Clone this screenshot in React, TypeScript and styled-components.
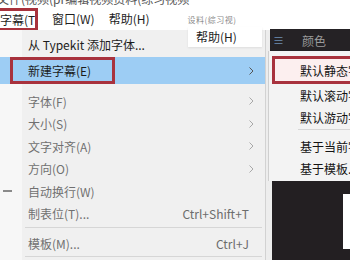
import styled, { createGlobalStyle } from "styled-components"

const Global = createGlobalStyle`
body {
  margin: 0;
  background: #ffffff;
  font-family: "Noto Sans CJK SC", "Noto Sans", sans-serif;
}
`

const Page = styled.div`
width: 350px;
height: 260px;
overflow: hidden;
position: relative;
display: flex;
flex-direction: column;
background: #ffffff;
font-size: 12px;
`
const TopStrip = styled.div`
height: 8px;
overflow: hidden;
`
const Caption = styled.div`
margin-top: -8px;
margin-left: -3px;
line-height: 14px;
font-size: 12px;
color: #555;
white-space: nowrap;
`
const MenuBar = styled.div`
height: 22px;
display: flex;
align-items: center;
gap: 14px;
color: #1e1e1e;
`
const MenuTitle = styled.div<{ $active?: boolean }>`
white-space: nowrap;
line-height: 22px;
${p => p.$active && `
  box-sizing: border-box;
  width: 45px;
  height: 23px;
  margin-left: -7px;
  margin-top: 1px;
  padding-left: 4px;
  border: 3px solid #a8323d;
  line-height: 17px;
  overflow: hidden;
`}
`
const Ghost = styled.div`
align-self: flex-start;
margin-top: 6px;
margin-left: 24px;
font-size: 8px;
letter-spacing: 0.5px;
color: #8a8a8a;
white-space: nowrap;
`
const Body = styled.div`
flex: 1;
display: flex;
min-height: 0;
`
const Dropdown = styled.div`
width: 266px;
flex-shrink: 0;
box-sizing: border-box;
border-right: 1px solid #d2d2d2;
padding-top: 3px;
display: flex;
flex-direction: column;
background: linear-gradient(to right, #f7f7f7 22px, #f0f0f0 22px);
`
const Row = styled.div<{ $h: number; $muted?: boolean; $active?: boolean }>`
height: ${p => p.$h}px;
flex-shrink: 0;
display: grid;
grid-template-columns: 28px 1fr auto 16px;
align-items: center;
color: ${p => (p.$muted ? "#707070" : "#1c1c1c")};
background: ${p => (p.$active ? "#9dcdf4" : "transparent")};
white-space: nowrap;
`
const Label = styled.span<{ $boxed?: boolean }>`
${p => p.$boxed && `
  box-sizing: border-box;
  align-self: stretch;
  width: 105px;
  margin-left: -18px;
  padding-left: 15px;
  border: 3px solid #a8323d;
  display: flex;
  align-items: center;
`}
`
const Shortcut = styled.span`
color: #6c6c6c;
`
const Mark = styled.span`
width: 9px;
height: 2px;
margin-left: 3px;
background: #8a8a8a;
`
const Separator = styled.div<{ $top: number; $bottom: number }>`
height: 1px;
flex-shrink: 0;
margin: ${p => p.$top}px 3px ${p => p.$bottom}px 25px;
background: #d6d6d6;
`
const Spacer = styled.div<{ $h: number }>`
height: ${p => p.$h}px;
flex-shrink: 0;
`
const Tip = styled.div`
position: absolute;
left: 188px;
top: 27px;
width: 74px;
height: 20px;
box-sizing: border-box;
padding-left: 8px;
line-height: 20px;
background: #ffffff;
color: #1e1e1e;
box-shadow: 0 1px 2px rgba(0, 0, 0, 0.08);
`
const Side = styled.div`
flex: 1;
min-width: 0;
display: flex;
flex-direction: column;
background: #ededed;
`
const PanelHead = styled.div`
height: 22px;
margin-left: 4px;
margin-top: -1px;
display: flex;
align-items: center;
gap: 18px;
padding-left: 3px;
background: #252225;
`
const Burger = styled.span`
font-size: 11px;
color: #6f8fb3;
`
const PanelTitle = styled.span`
color: #9c9c9c;
`
const SubMenu = styled.div`
margin-left: 2px;
height: 130px;
flex-shrink: 0;
box-sizing: border-box;
padding-top: 5px;
border-left: 1px solid #cfcfcf;
background: #f3f3f3;
display: flex;
flex-direction: column;
overflow: hidden;
`
const SubRow = styled.div<{ $active?: boolean }>`
height: ${p => (p.$active ? 28 : 22)}px;
flex-shrink: 0;
display: flex;
align-items: center;
white-space: nowrap;
color: #141414;
box-sizing: border-box;
padding-left: ${p => (p.$active ? 25 : 31)}px;
${p => p.$active && `
  margin-left: 3px;
  margin-right: -10px;
  border: 3px solid #a8323d;
  background: #fcefef;
`}
`
const SubSeparator = styled.div`
height: 1px;
flex-shrink: 0;
margin: 1px 0 5px 29px;
background: #d6d6d6;
`
const DarkPanel = styled.div`
flex: 1;
margin-left: 6px;
padding-top: 13px;
display: flex;
justify-content: flex-end;
align-items: flex-start;
background: #231f22;
`
const WhiteEdge = styled.div`
width: 7px;
height: 55px;
background: #ffffff;
`

const Chevron = ({ dark }: { dark?: boolean }) => (
    <svg width="5" height="8" viewBox="0 0 5 8">
        <polyline points="0.5,0.5 4,4 0.5,7.5" fill="none" stroke={dark ? "#555" : "#a8a8a8"} strokeWidth="1" />
    </svg>
)

const App = () => {
    return (
        <Page>
            <Global />
            <TopStrip>
                <Caption>文件(视频(pr编辑视频资料(综习视频</Caption>
            </TopStrip>
            <MenuBar>
                <MenuTitle $active>字幕(T)</MenuTitle>
                <MenuTitle>窗口(W)</MenuTitle>
                <MenuTitle>帮助(H)</MenuTitle>
                <Ghost>设料(综习视)</Ghost>
            </MenuBar>
            <Body>
                <Dropdown>
                    <Row $h={22}><span /><Label>从 Typekit 添加字体...</Label><span /><span /></Row>
                    <Spacer $h={2} />
                    <Row $h={27} $active>
                        <span /><Label $boxed>新建字幕(E)</Label><span /><Chevron dark />
                    </Row>
                    <Spacer $h={6} />
                    <Row $h={22.5} $muted><span /><Label>字体(F)</Label><span /><Chevron /></Row>
                    <Row $h={22.5} $muted><span /><Label>大小(S)</Label><span /><Chevron /></Row>
                    <Row $h={22.5} $muted><span /><Label>文字对齐(A)</Label><span /><Chevron /></Row>
                    <Row $h={22.5} $muted><span /><Label>方向(O)</Label><span /><Chevron /></Row>
                    <Row $h={22.5} $muted><Mark /><Label>自动换行(W)</Label><span /><span /></Row>
                    <Row $h={22.5} $muted><span /><Label>制表位(T)...</Label><Shortcut>Ctrl+Shift+T</Shortcut><span /></Row>
                    <Separator $top={2} $bottom={4} />
                    <Row $h={22} $muted><span /><Label>模板(M)...</Label><Shortcut>Ctrl+J</Shortcut><span /></Row>
                    <Separator $top={2} $bottom={0} />
                </Dropdown>
                <Side>
                    <PanelHead>
                        <Burger>≡</Burger>
                        <PanelTitle>颜色</PanelTitle>
                    </PanelHead>
                    <SubMenu>
                        <SubRow $active>默认静态字幕</SubRow>
                        <SubRow>默认滚动字幕</SubRow>
                        <SubRow>默认游动字幕</SubRow>
                        <SubSeparator />
                        <SubRow>基于当前字幕</SubRow>
                        <SubRow>基于模板...</SubRow>
                    </SubMenu>
                    <DarkPanel>
                        <WhiteEdge />
                    </DarkPanel>
                </Side>
            </Body>
            <Tip>帮助(H)</Tip>
        </Page>
    )
}
export default App
